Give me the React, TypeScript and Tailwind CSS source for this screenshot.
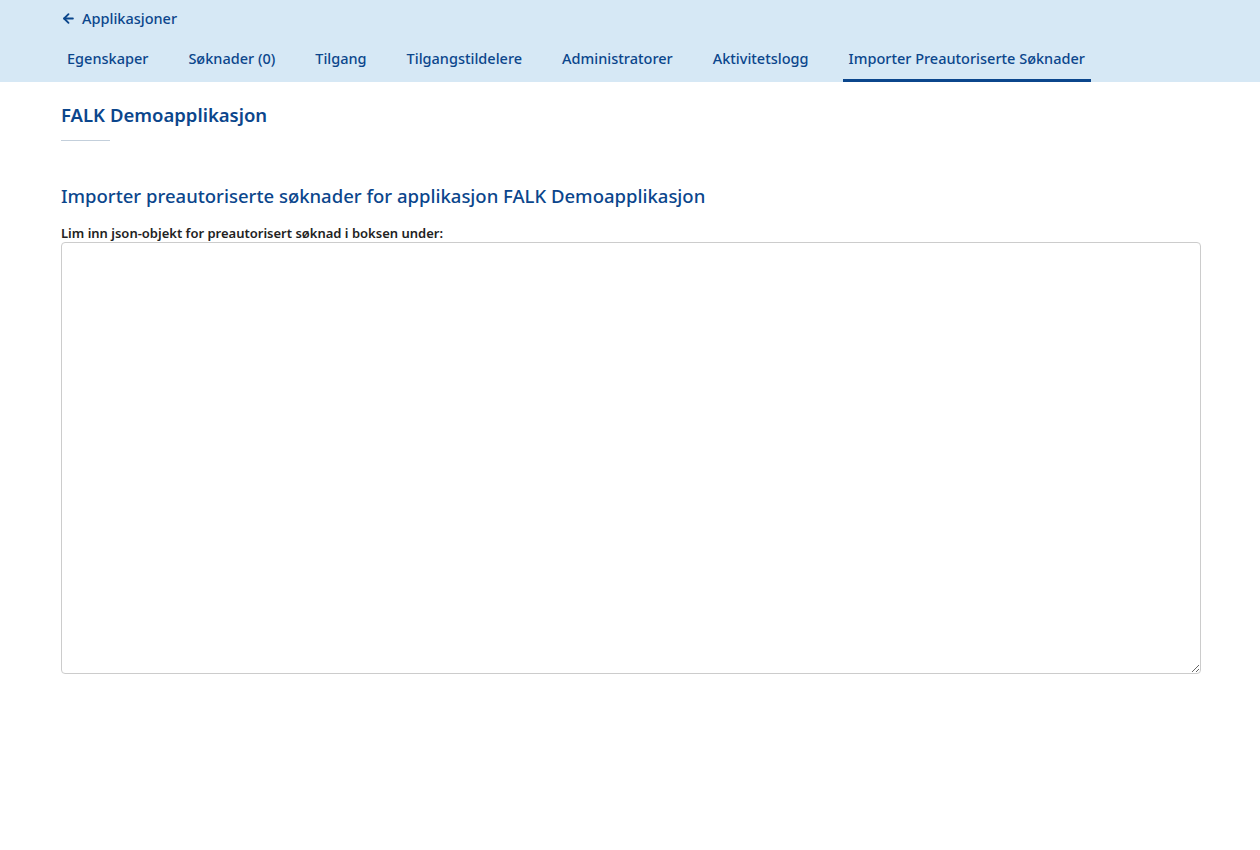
import { ArrowLeft } from "lucide-react"

export default function App() {
  const tabs = [
    "Egenskaper",
    "Søknader (0)",
    "Tilgang",
    "Tilgangstildelere",
    "Administratorer",
    "Aktivitetslogg",
    "Importer Preautoriserte Søknader",
  ]
  const active = tabs.length - 1

  return (
    <div className="min-h-[850px] bg-white font-['Noto_Sans',sans-serif]">
      <header className="bg-[#d6e8f5]">
        <div className="px-[61px]">
          <a href="#" className="flex items-center gap-[6px] pt-[8px] text-[14.5px] font-medium text-[#0b468c]">
            <ArrowLeft className="h-[15px] w-[15px]" strokeWidth={3} />
            Applikasjoner
          </a>
          <nav className="mt-[18px] flex gap-[28px]">
            {tabs.map((tab, i) => (
              <div
                key={tab}
                className={
                  "border-b-[3px] px-[6px] pb-[9px] text-[14.5px] font-medium text-[#0b468c] " +
                  (i === active ? "border-[#0b468c]" : "border-transparent")
                }
              >
                {tab}
              </div>
            ))}
          </nav>
        </div>
      </header>

      <main className="pl-[61px] pr-[59px]">
        <h1 className="pt-[19px] text-[18.5px] font-semibold text-[#0b468c]">FALK Demoapplikasjon</h1>
        <div className="mt-[12px] h-px w-[49px] bg-[#c3cfdb]" />

        <h2 className="mt-[41px] text-[18.5px] font-medium text-[#0b468c]">
          Importer preautoriserte søknader for applikasjon FALK Demoapplikasjon
        </h2>
        <label className="mt-[15px] block text-[13px] leading-[17px] font-semibold text-[#222]">
          Lim inn json-objekt for preautorisert søknad i boksen under:
        </label>
        <textarea className="block h-[432px] w-full rounded-[4px] border border-[#ccc] p-2 text-[14px] outline-none" />
      </main>
    </div>
  )
}
